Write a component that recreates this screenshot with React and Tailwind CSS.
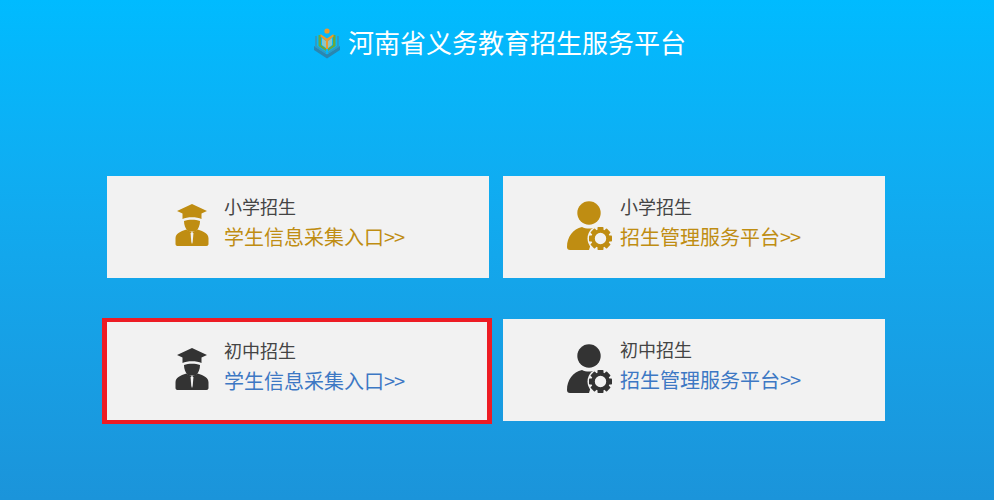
const cjk = { fontFamily: '"Microsoft YaHei", "Noto Sans CJK SC", "Noto Sans", sans-serif' };

const BookLogo = () => (
  <svg width="28" height="34" viewBox="0 0 28 34" className="shrink-0">
    <path d="M1 21 L14 29.5 L27 21 L27 25 L14 33.5 L1 25 Z" fill="#2a86b0" />
    <path d="M2 11 L4 11 L4 21 L13 27 L13 29 L2 22 Z" fill="#2f9cc4" />
    <path d="M26 11 L24 11 L24 21 L15 27 L15 29 L26 22 Z" fill="#2f9cc4" />
    <path d="M5.5 10 L8 10 L8 20 L13 23.5 L13 26 L5.5 21 Z" fill="#6aa83e" />
    <path d="M22.5 10 L20 10 L20 20 L15 23.5 L15 26 L22.5 21 Z" fill="#6aa83e" />
    <path d="M9 13 L13 16 L13 23 L9 20 Z M19 13 L15 16 L15 23 L19 20 Z" fill="#8fc5c5" />
    <circle cx="14" cy="6" r="2.6" fill="#ef9a2c" />
    <path d="M7.5 9 L14 13.5 L20.5 9 L20.5 11.5 L15 16 L15 24 L13 24 L13 16 L7.5 11.5 Z" fill="#ef9a2c" />
  </svg>
);

const CapIcon = ({ color }) => (
  <svg width="34" height="42" viewBox="0 0 34 42" fill={color}>
    <path d="M17 0 L32 7 L26.5 9.5 L26.5 15 C22 12.5 12 12.5 7.5 15 L7.5 9.5 L2 7 Z" />
    <path d="M9 17 C13.5 15.2 20.5 15.2 25 17 C25 21 23.5 25 21 27 L13 27 C10.5 25 9 21 9 17 Z" />
    <path d="M11.5 25.5 C14 28 20 28 22.5 25.5 C29 27.5 33.5 29.5 33.5 34.5 L33.5 40 C33.5 41.2 32.7 42 31.5 42 L2.5 42 C1.3 42 0.5 41.2 0.5 40 L0.5 34.5 C0.5 29.5 5 27.5 11.5 25.5 Z" />
    <path d="M15.6 29.5 L17 27.5 L18.4 29.5 L17.7 38 L17 40 L16.3 38 Z" fill="#f2f2f2" />
  </svg>
);

const GearIcon = ({ color }) => (
  <svg width="46" height="49" viewBox="0 0 46 49" fill={color}>
    <circle cx="22" cy="12" r="11.7" />
    <path d="M15 26 C19 28 25 28 29 26 L22 49 L3 49 C1 49 0 48 0 46 C0 36 6 28 15 26 Z" />
    <circle cx="33.5" cy="37.5" r="13" fill="#f2f2f2" />
    {[0, 45, 90, 135, 180, 225, 270, 315].map((a) => (
      <rect key={a} x="30.5" y="26" width="6" height="5" rx="0.8" transform={`rotate(${a} 33.5 37.5)`} />
    ))}
    <circle cx="33.5" cy="37.5" r="7.5" fill="#f2f2f2" stroke={color} strokeWidth="3.6" />
  </svg>
);

const Card = ({ icon, title, link, linkColor, iconClass, selected }) => (
  <div
    className={
      selected
        ? "h-[106px] -ml-[5px] -mr-[3px] -mt-px -mb-[3px] border-x-[5px] border-y-4 border-[#ed1c24] bg-[#f2f2f2] flex items-center"
        : "h-[102px] bg-[#f2f2f2] flex items-center"
    }
  >
    <div className={`w-[117px] shrink-0 flex pb-1 ${iconClass}`}>{icon}</div>
    <div className="text-left pb-[10px]">
      <div className="text-[18px] leading-[24px] text-[#444]">{title}</div>
      <div className={`mt-[5px] text-[20px] leading-[28px] ${linkColor}`}>
        {link}
        <span className="tracking-[-1px]">&gt;&gt;</span>
      </div>
    </div>
  </div>
);

export default function App() {
  return (
    <div
      className="w-full h-[500px] overflow-hidden bg-gradient-to-b from-[#00bbff] to-[#1b94da]"
      style={cjk}
    >
      <div className="pt-[25px] pl-[5px] flex justify-center items-center gap-[7px]">
        <BookLogo />
        <h1 className="text-[26px] leading-[34px] text-white font-normal">河南省义务教育招生服务平台</h1>
      </div>
      <div className="mt-[117px] ml-[107px] w-[778px] grid grid-cols-[382px_382px] gap-x-[14px] gap-y-[41px]">
        <Card
          icon={<CapIcon color="#bf8d12" />}
          iconClass="pl-[68px]"
          title="小学招生"
          link="学生信息采集入口"
          linkColor="text-[#bf8d12]"
        />
        <Card
          icon={<GearIcon color="#bf8d12" />}
          iconClass="pl-[64px]"
          title="小学招生"
          link="招生管理服务平台"
          linkColor="text-[#bf8d12]"
        />
        <Card
          icon={<CapIcon color="#333333" />}
          iconClass="pl-[68px]"
          title="初中招生"
          link="学生信息采集入口"
          linkColor="text-[#3d78c4]"
          selected
        />
        <Card
          icon={<GearIcon color="#333333" />}
          iconClass="pl-[64px]"
          title="初中招生"
          link="招生管理服务平台"
          linkColor="text-[#3d78c4]"
        />
      </div>
    </div>
  );
}
